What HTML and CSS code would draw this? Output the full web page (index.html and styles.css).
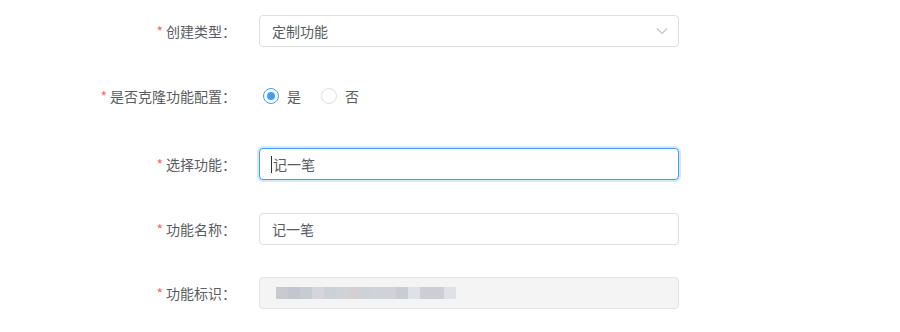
FILE: index.html
```html
<!DOCTYPE html>
<html lang="zh">
<head>
<meta charset="utf-8">
<link rel="stylesheet" href="styles.css">
</head>
<body>
<form class="form">
  <div class="item item-1">
    <label class="label"><span class="star">*</span>创建类型：</label>
    <div class="control select">
      <span class="value">定制功能</span>
      <svg class="arrow" width="12" height="8" viewBox="0 0 12 8"><path d="M1 1.5 L6 6.5 L11 1.5" fill="none" stroke="#c0c4cc" stroke-width="1.2"/></svg>
    </div>
  </div>
  <div class="item item-2">
    <label class="label"><span class="star">*</span>是否克隆功能配置：</label>
    <div class="radios">
      <span class="radio checked"><span class="dot"></span></span><span class="rlabel">是</span>
      <span class="radio"></span><span class="rlabel">否</span>
    </div>
  </div>
  <div class="item item-3">
    <label class="label"><span class="star">*</span>选择功能：</label>
    <div class="control input focus"><span class="caret"></span><span class="value">记一笔</span></div>
  </div>
  <div class="item item-4">
    <label class="label"><span class="star">*</span>功能名称：</label>
    <div class="control input"><span class="value">记一笔</span></div>
  </div>
  <div class="item">
    <label class="label"><span class="star">*</span>功能标识：</label>
    <div class="control input disabled">
      <span class="mosaic">
        <i class="c1"></i><i class="c2"></i><i class="c3"></i><i class="c4"></i><i class="c5"></i><i class="c6"></i><i class="c7"></i><i class="c8"></i><i class="c6"></i><i class="c9"></i><i class="c10"></i><i class="c11"></i><i class="c12"></i><i class="c12"></i><i class="c11"></i>
      </span>
    </div>
  </div>
</form>
</body>
</html>
```

FILE: styles.css
```css
html, body {
  margin: 0;
  padding: 0;
  background: #ffffff;
}
body {
  font-family: "Noto Sans CJK SC", "Microsoft YaHei", sans-serif;
  font-size: 14px;
  color: #606266;
}
.form {
  padding-top: 15px;
}
.item {
  display: flex;
  align-items: center;
  height: 32px;
  margin-bottom: 32px;
}
.item-1 { margin-bottom: 33px; }
.item-2 { margin-bottom: 36px; }
.item-3 { margin-bottom: 33px; }
.label {
  width: 236px;
  flex: none;
  text-align: right;
  line-height: 32px;
  color: #5a5c61;
  white-space: nowrap;
}
.star {
  color: #f56c6c;
  margin-right: 3px;
}
.control {
  box-sizing: border-box;
  width: 420px;
  height: 32px;
  margin-left: 23px;
  border: 1px solid #dcdfe6;
  border-radius: 4px;
  display: flex;
  align-items: center;
  padding: 0 12px;
  line-height: 30px;
  color: #5a5c61;
  background: #fff;
}
.select {
  justify-content: space-between;
  padding-right: 10px;
}
.arrow { display: block; }
.focus {
  border-color: #409eff;
  box-shadow: 0 0 0 2px rgba(64, 158, 255, 0.22);
}
.caret {
  display: inline-block;
  width: 1px;
  height: 17px;
  background: #303133;
  margin-right: 1px;
  margin-left: -1px;
}
.disabled {
  background: #f4f4f5;
  border-color: #e1e2e6;
}
.mosaic {
  display: flex;
  margin-left: 4px;
  height: 12px;
}
.mosaic i {
  display: block;
  width: 12px;
  height: 12px;
}
.c1 { background: #c9cacf; }
.c2 { background: #c3c6cd; }
.c3 { background: #c7ccd3; }
.c4 { background: #d4d6db; }
.c5 { background: #ccd0d7; }
.c6 { background: #cfd2d7; }
.c7 { background: #d3d0d4; }
.c8 { background: #cdd2d9; }
.c9 { background: #d0d2d7; }
.c10 { background: #c9ccd2; }
.c11 { background: #dee1e5; }
.c12 { background: #cdced3; }
.radios {
  margin-left: 27px;
  display: flex;
  align-items: center;
}
.radio {
  box-sizing: border-box;
  width: 16px;
  height: 16px;
  border-radius: 50%;
  border: 1px solid #dcdfe6;
  background: #fff;
  display: flex;
  align-items: center;
  justify-content: center;
}
.radio.checked {
  border-color: #409eff;
}
.dot {
  width: 8px;
  height: 8px;
  border-radius: 50%;
  background: #409eff;
}
.rlabel {
  margin-left: 8px;
  margin-right: 20px;
  color: #5a5c61;
  line-height: 32px;
}
```
